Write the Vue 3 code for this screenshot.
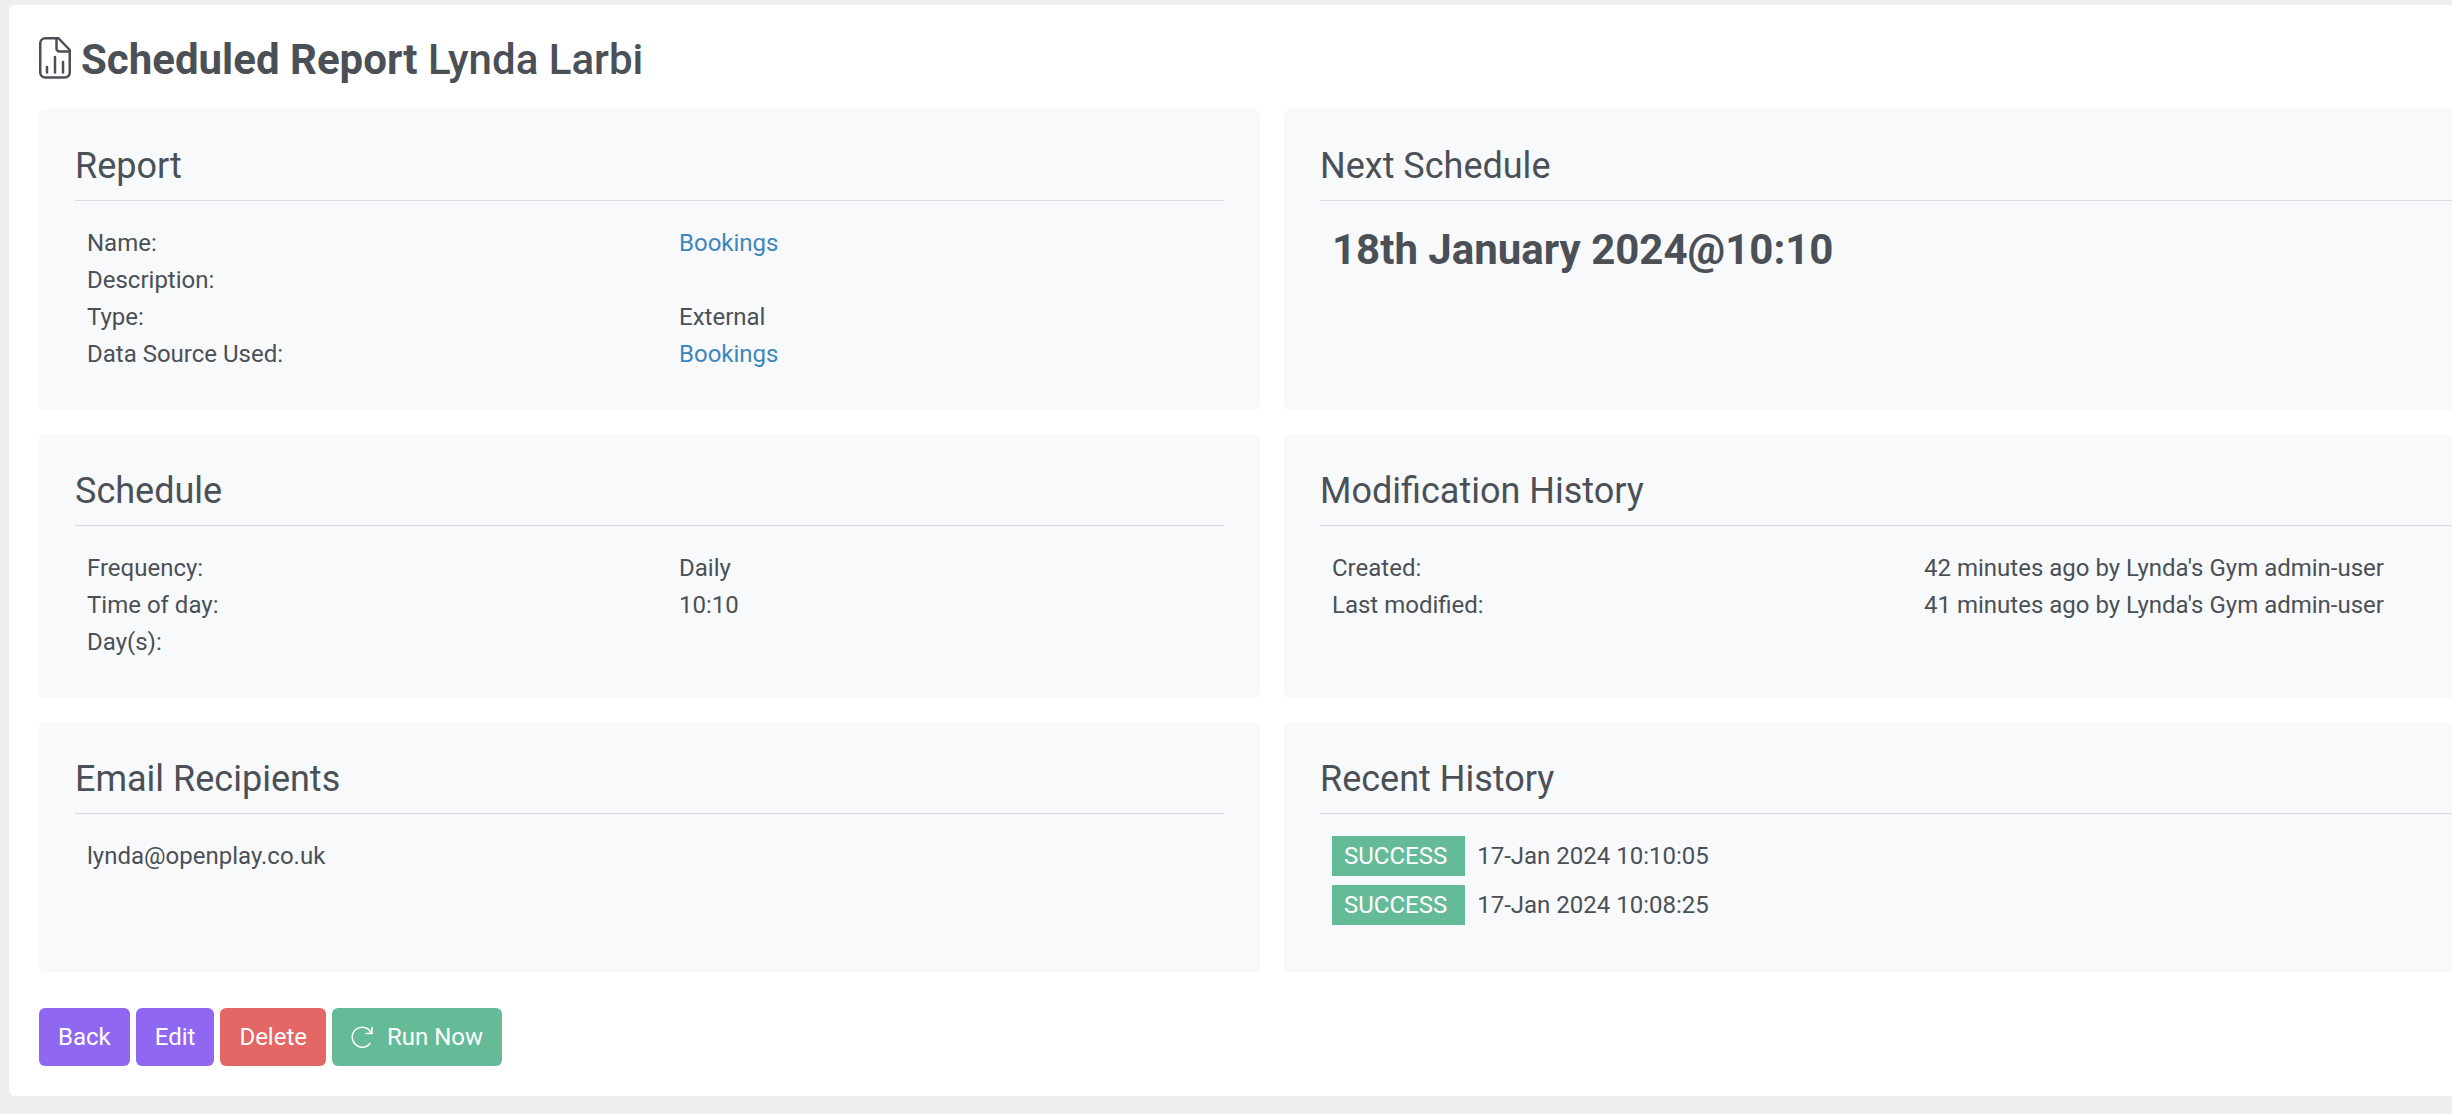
<script setup>
const report = [
  { label: 'Name:', value: 'Bookings', href: '#bookings' },
  { label: 'Description:', value: '' },
  { label: 'Type:', value: 'External' },
  { label: 'Data Source Used:', value: 'Bookings', href: '#data-source' },
]
const schedule = [
  { label: 'Frequency:', value: 'Daily' },
  { label: 'Time of day:', value: '10:10' },
  { label: 'Day(s):', value: '' },
]
const modifications = [
  { label: 'Created:', value: "42 minutes ago by Lynda's Gym admin-user" },
  { label: 'Last modified:', value: "41 minutes ago by Lynda's Gym admin-user" },
]
const runs = [
  { status: 'SUCCESS', time: '17-Jan 2024 10:10:05' },
  { status: 'SUCCESS', time: '17-Jan 2024 10:08:25' },
]
</script>

<template>
  <div class="page">
    <main class="panel">
      <h1 class="title">
        <svg class="title-icon" viewBox="0 0 32 42" fill="none" stroke="currentColor" stroke-width="2.500" stroke-linecap="round" stroke-linejoin="round" aria-hidden="true">
          <path d="M6 1.250h13.500L30.750 13v22.500a5 5 0 0 1-5 5H6.250a5 5 0 0 1-5-5V6a5 5 0 0 1 5-4.750z" />
          <path d="M17.500 1.500v10a3 3 0 0 0 3 3H30.500" />
          <path d="M8 30v5.500M16 20v15.500M24 25v10.500" />
        </svg>
        <span><strong>Scheduled Report</strong> Lynda Larbi</span>
      </h1>

      <div class="cards">
        <section class="card">
          <h2>Report</h2>
          <dl class="details">
            <div v-for="row in report" :key="row.label" class="detail">
              <dt>{{ row.label }}</dt>
              <dd><a v-if="row.href" :href="row.href">{{ row.value }}</a><template v-else>{{ row.value }}</template></dd>
            </div>
          </dl>
        </section>

        <section class="card">
          <h2>Next Schedule</h2>
          <p class="next-date">18th January 2024@10:10</p>
        </section>

        <section class="card">
          <h2>Schedule</h2>
          <dl class="details">
            <div v-for="row in schedule" :key="row.label" class="detail">
              <dt>{{ row.label }}</dt>
              <dd>{{ row.value }}</dd>
            </div>
          </dl>
        </section>

        <section class="card">
          <h2>Modification History</h2>
          <dl class="details">
            <div v-for="row in modifications" :key="row.label" class="detail">
              <dt>{{ row.label }}</dt>
              <dd>{{ row.value }}</dd>
            </div>
          </dl>
        </section>

        <section class="card">
          <h2>Email Recipients</h2>
          <ul class="list">
            <li>lynda@openplay.co.uk</li>
          </ul>
        </section>

        <section class="card">
          <h2>Recent History</h2>
          <ul class="list">
            <li v-for="run in runs" :key="run.time" class="run">
              <span class="badge">{{ run.status }}</span><time>{{ run.time }}</time>
            </li>
          </ul>
        </section>
      </div>

      <div class="actions">
        <button type="button">Back</button>
        <button type="button">Edit</button>
        <button type="button" class="danger">Delete</button>
        <button type="button" class="success">
          <svg class="run-icon" viewBox="0 0 22 22" fill="none" stroke="currentColor" stroke-width="1.500" stroke-linecap="round" stroke-linejoin="round" aria-hidden="true">
            <path d="M19 17.500A10 10 0 1 1 20.500 7.500" />
            <path d="M21 1.500v6h-6" />
          </svg>
          Run Now
        </button>
      </div>
    </main>
  </div>
</template>

<style>
body {
  margin: 0;
  background: #eee;
}
</style>

<style scoped>
.page {
  min-height: 100vh;
  box-sizing: border-box;
  padding: 5px 0 18px 9px;
  overflow: hidden;
  background: #eee;
  color: #4b5057;
  font-family: Roboto, "Liberation Sans", sans-serif;
  font-size: 24px;
  line-height: 37px;
}

/* The panel runs on past the right edge of the view. */
.panel {
  margin-right: -83px;
  padding: 30px;
  background: #fff;
  border-radius: 6px;
}

.title {
  display: flex;
  align-items: center;
  gap: 10px;
  margin: 0 0 24px;
  font-size: 42px;
  line-height: 50px;
  font-weight: 500;
}

.title strong {
  font-weight: 700;
}

.title-icon {
  width: 32px;
  height: 42px;
  margin-bottom: 4px;
}

.cards {
  display: grid;
  grid-template-columns: 1fr 1fr;
  gap: 24px;
}

.card {
  padding: 36px;
  background: #f8f9fb;
  border-radius: 6px;
}

.card h2 {
  margin: 0 0 24px;
  padding-bottom: 13px;
  border-bottom: 1px solid #d9dce0;
  font-size: 36px;
  line-height: 42px;
  font-weight: 400;
}

.details,
.list {
  margin: 0;
  padding: 0 0 0 12px;
  list-style: none;
}

.details {
  padding-bottom: 1px;
}

.detail {
  display: grid;
  grid-template-columns: 592px 1fr;
  min-height: 37px;
}

dd {
  margin: 0;
}

a {
  color: #3d87c0;
  text-decoration: none;
}

.next-date {
  margin: 0;
  padding-left: 12px;
  font-size: 42px;
  line-height: 50px;
  font-weight: 700;
}

.run {
  margin-bottom: 12px;
}

.badge {
  margin-right: 12px;
  padding: 6px 18px 6px 12px;
  background: #65bb97;
  color: #fff;
}

.actions {
  display: flex;
  gap: 6px;
  margin-top: 36px;
}

button {
  display: flex;
  align-items: center;
  gap: 14px;
  height: 58px;
  padding: 0 19px;
  border: 0;
  border-radius: 6px;
  background: #9067f0;
  color: #fff;
  font: inherit;
  cursor: pointer;
}

.danger {
  background: #e36764;
}

.success {
  background: #65bb97;
}

.run-icon {
  width: 22px;
  height: 22px;
}
</style>
